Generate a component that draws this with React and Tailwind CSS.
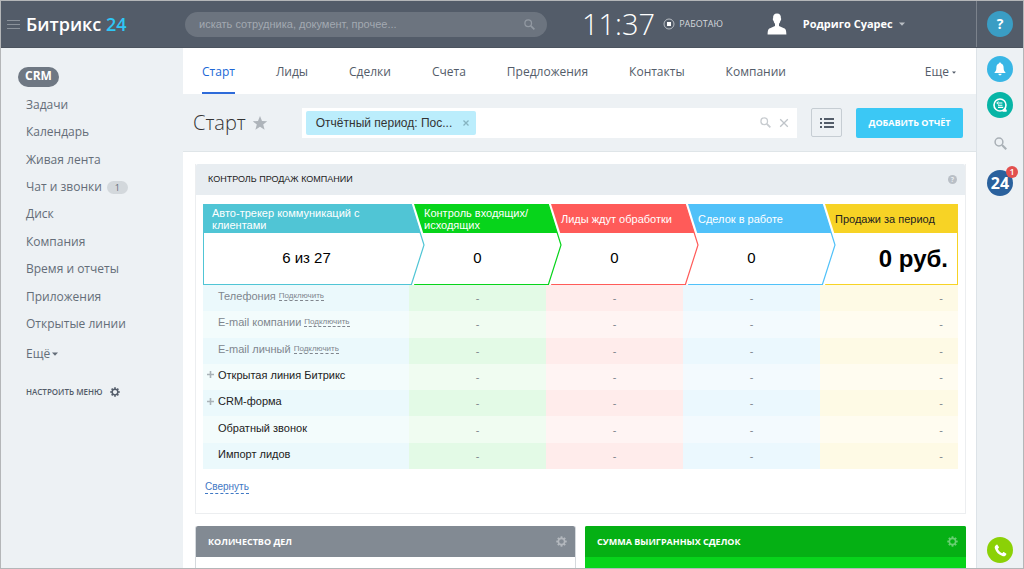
import React from "react";

const menu = [
  { label: "Задачи" },
  { label: "Календарь" },
  { label: "Живая лента" },
  { label: "Чат и звонки", count: 1 },
  { label: "Диск" },
  { label: "Компания" },
  { label: "Время и отчеты" },
  { label: "Приложения" },
  { label: "Открытые линии" },
];

const tabs = [
  "Старт",
  "Лиды",
  "Сделки",
  "Счета",
  "Предложения",
  "Контакты",
  "Компании",
];

const stages = [
  {
    title: "Авто-трекер коммуникаций с клиентами",
    value: "6 из 27",
    color: "#50c5d5",
    head: "bg-[#50c5d5] text-white pl-[9px] pr-8",
    body: "border-b-[#50c5d5] border-l border-l-[#50c5d5] text-[15px]",
  },
  {
    title: "Контроль входящих/исходящих",
    value: "0",
    color: "#07d41b",
    head: "bg-[#07d41b] text-white pl-[15px]",
    body: "border-b-[#07d41b] text-[15px]",
  },
  {
    title: "Лиды ждут обработки",
    value: "0",
    color: "#ff5b59",
    head: "bg-[#ff5b59] text-white pl-[15px]",
    body: "border-b-[#ff5b59] text-[15px]",
  },
  {
    title: "Сделок в работе",
    value: "0",
    color: "#50c1f9",
    head: "bg-[#50c1f9] text-white pl-[15px]",
    body: "border-b-[#50c1f9] text-[15px]",
  },
  {
    title: "Продажи за период",
    value: "0 руб.",
    head: "bg-[#f7d325] text-[#222] pl-[15px]",
    body: "border-b-[#f7d325] border-r border-r-[#f7d325] justify-end pr-[9px] text-2xl font-bold",
  },
];

const sources = [
  { name: "Телефония", connect: true },
  { name: "E-mail компании", connect: true },
  { name: "E-mail личный", connect: true },
  { name: "Открытая линия Битрикс", nested: true },
  { name: "CRM-форма", nested: true },
  { name: "Обратный звонок" },
  { name: "Импорт лидов" },
];

// Cell tints of the funnel, for odd and even rows
const tints = [
  ["bg-[#ebf9fc]", "bg-[#f3fcfc]"],
  ["bg-[#e3fae6]", "bg-[#f0fcf1]"],
  ["bg-[#ffeceb]", "bg-[#fff4f3]"],
  ["bg-[#ebf8fe]", "bg-[#f3fafe]"],
  ["bg-[#fefae5]", "bg-[#fffcf0]"],
];

function Caret({ className }) {
  return (
    <svg viewBox="0 0 6 4" className={className} fill="currentColor">
      <path d="M0 0.5h6L3 3.7z" />
    </svg>
  );
}

function Magnifier({ className }) {
  return (
    <svg
      viewBox="0 0 12 12"
      className={className}
      fill="none"
      stroke="currentColor"
    >
      <circle cx="4.6" cy="4.6" r="3.6" strokeWidth="1.4" />
      <path d="M7.4 7.4L11.3 11.3" strokeWidth="1.9" />
    </svg>
  );
}

function Gear({ className }) {
  const teeth = [0, 45, 90, 135, 180, 225, 270, 315];
  return (
    <svg viewBox="0 0 12 12" className={className} fill="none">
      <circle cx="6" cy="6" r="3.4" stroke="currentColor" strokeWidth="1.7" />
      {teeth.map((a) => (
        <rect
          key={a}
          x="5"
          y="0.3"
          width="2"
          height="2"
          fill="currentColor"
          transform={`rotate(${a} 6 6)`}
        />
      ))}
    </svg>
  );
}

// Arrow tip that overlaps the next column of the funnel
function StageTip({ color }) {
  return (
    <svg
      viewBox="0 0 18 81"
      className="absolute top-0 left-full z-10 h-[81px] w-[18px]"
      fill="none"
    >
      <path d="M0 0H5L18 41L5 81H0z" fill="#fff" />
      <path d="M0 0H2.2L11.4 29H0z" fill={color} />
      <path
        d="M2.2 0L15 41L2.4 80.5H0"
        stroke={color}
        strokeWidth="1.2"
      />
    </svg>
  );
}

function Header() {
  return (
    <header className="flex h-[47px] shrink-0 border-b border-[#4c545f] bg-[#535c69]">
      <div className="flex w-[182px] shrink-0 items-center pl-1.5">
        <button aria-label="Меню" className="flex w-[13px] flex-col gap-[3px]">
          <span className="h-px w-full bg-[#8b929b]" />
          <span className="h-px w-full bg-[#8b929b]" />
          <span className="h-px w-full bg-[#8b929b]" />
        </button>
        <a
          href="#"
          className="ml-1.5 text-[18px] leading-6 font-semibold whitespace-nowrap text-white"
        >
          Битрикс <span className="text-[#2fc6f6]">24</span>
        </a>
      </div>

      <div className="flex flex-1 items-center">
        <label className="ml-0.5 flex h-[25px] w-[362px] items-center rounded-full bg-[#6c747f] pr-3 pl-3.5">
          <input
            type="text"
            aria-label="Поиск"
            placeholder="искать сотрудника, документ, прочее..."
            className="min-w-0 flex-1 bg-transparent font-['Liberation_Sans',sans-serif] text-[11px] outline-none placeholder:text-[#a3a9b1]"
          />
          <Magnifier className="size-[11px] text-[#9299a2]" />
        </label>
        <span className="ml-[35px] text-[29px] leading-8 font-light text-white">
          11:37
        </span>
        <button className="ml-2 flex items-center gap-1 text-[9px] text-[#d5d8dc]">
          <svg viewBox="0 0 12 12" className="size-3" fill="none">
            <circle cx="6" cy="6" r="5" stroke="#b9bec4" />
            <rect x="4" y="4" width="4" height="4" fill="#fff" />
          </svg>
          РАБОТАЮ
        </button>
        <button className="ml-11 flex items-center text-[11px] font-bold text-white">
          <svg viewBox="0 0 20 22" className="h-[22px] w-5" fill="#fff">
            <path d="M10 0.5C7.2 0.5 5.9 2.5 6.1 5.2C5.4 5.6 6 7.6 6.6 7.8C6.9 9.4 7.4 10.2 8 10.8V13L3 15.2C1 16.1 0.8 17.5 0.6 21.5H19.4C19.2 17.5 19 16.1 17 15.2L12 13V10.8C12.6 10.2 13.1 9.4 13.4 7.8C14 7.6 14.6 5.6 13.9 5.2C14.1 2.5 12.8 0.5 10 0.5z" />
          </svg>
          <span className="ml-4">Родриго Суарес</span>
          <Caret className="ml-1.5 h-1 w-1.5 text-[#b9bec4]" />
        </button>
      </div>

      <div className="flex w-[47px] shrink-0 items-center justify-center border-l border-[#7b828c]">
        <button
          aria-label="Помощь"
          className="size-[26px] rounded-full bg-[#3a9dc4] text-sm font-bold text-white"
        >
          ?
        </button>
      </div>
    </header>
  );
}

function Sidebar() {
  return (
    <nav className="w-[182px] shrink-0 pt-[19px] text-xs text-[#646d78]">
      <a
        href="#"
        className="ml-[17px] block h-5 w-[41px] rounded-full bg-[#6f7883] text-center leading-[18px] font-bold text-white"
      >
        CRM
      </a>
      <ul className="mt-1 ml-[25px] grid h-[247px]">
        {menu.map((item) => (
          <li key={item.label} className="flex items-center">
            <a href="#">{item.label}</a>
            {item.count && (
              <span className="ml-[5px] h-[13px] w-[21px] rounded-full bg-[#d3d8dc] text-center text-[9px] leading-[13px]">
                {item.count}
              </span>
            )}
          </li>
        ))}
      </ul>
      <button className="mt-2 ml-[25px] flex items-center gap-0.5">
        Ещё <Caret className="h-1 w-1.5" />
      </button>
      <button className="mt-[22px] ml-[25px] flex items-center gap-2 text-[8px] leading-4 font-semibold text-[#535c69]">
        НАСТРОИТЬ МЕНЮ <Gear className="size-2.5" />
      </button>
    </nav>
  );
}

function Tabs() {
  return (
    <nav className="flex h-[46px] shrink-0 items-stretch gap-[41px] bg-white pt-1 pr-5 pl-[19px] text-xs font-medium text-[#535c69]">
      {tabs.map((tab, i) => (
        <a
          key={tab}
          href="#"
          className={
            i === 0
              ? "flex items-center border-b-2 border-[#2e6bd9] text-[#2067d6]"
              : "flex items-center border-b-2 border-transparent"
          }
        >
          {tab}
        </a>
      ))}
      <button className="ml-auto flex items-center gap-[3px] border-b-2 border-transparent">
        Еще <Caret className="h-[3px] w-1" />
      </button>
    </nav>
  );
}

function Toolbar() {
  return (
    <div className="flex h-[58px] shrink-0 items-center border-b border-[#dfe5e8] pr-[13px] pl-2.5">
      <h1 className="text-[20px] font-light text-[#333]">Старт</h1>
      <button aria-label="В избранное" className="ml-1.5">
        <svg viewBox="0 0 16 16" className="size-4" fill="#aeb4ba">
          <path d="M8 1L10 6L15.2 6.3L11.2 9.6L12.6 14.7L8 11.8L3.4 14.7L4.8 9.6L0.8 6.3L6 6z" />
        </svg>
      </button>
      <div className="ml-[34px] flex h-[30px] min-w-0 flex-1 items-center bg-white pr-2 pl-1">
        <span className="flex h-6 w-[170px] items-center justify-between rounded-xs bg-[#bbedfc] pr-[7px] pl-2.5 font-['Liberation_Sans',sans-serif] text-xs text-[#333]">
          Отчётный период: Пос...
          <button aria-label="Удалить">
            <svg viewBox="0 0 6 6" className="size-1.5" stroke="#86b3c1">
              <path d="M0.5 0.5L5.5 5.5M5.5 0.5L0.5 5.5" strokeWidth="1.3" />
            </svg>
          </button>
        </span>
        <input aria-label="Фильтр" className="min-w-0 flex-1 outline-none" />
        <button aria-label="Найти">
          <Magnifier className="size-[11px] text-[#c8ccd0]" />
        </button>
        <button aria-label="Сбросить" className="ml-2">
          <svg viewBox="0 0 10 10" className="size-2.5" stroke="#bfc4c9">
            <path d="M1.2 1.2L8.8 8.8M8.8 1.2L1.2 8.8" strokeWidth="1.3" />
          </svg>
        </button>
      </div>
      <button
        aria-label="Список"
        className="ml-3.5 flex h-[29px] w-[31px] items-center justify-center rounded-xs border border-[#c6cdd3]"
      >
        <svg viewBox="0 0 14 12" className="h-3 w-3.5" fill="#535c69">
          <path d="M0 1h2v2H0zM0 5h2v2H0zM0 9h2v2H0zM4 1h10v2H4zM4 5h10v2H4zM4 9h10v2H4z" />
        </svg>
      </button>
      <button className="ml-3.5 h-[30px] w-[107px] rounded-xs bg-[#3bc8f5] text-[9px] font-bold text-white">
        ДОБАВИТЬ ОТЧЁТ
      </button>
    </div>
  );
}

function Funnel() {
  return (
    <table className="h-[265px] w-full table-fixed border-collapse font-['Liberation_Sans',sans-serif]">
      <colgroup>
        <col />
        <col className="w-[137px]" />
        <col className="w-[137px]" />
        <col className="w-[137px]" />
        <col className="w-[138px]" />
      </colgroup>
      <thead>
        <tr className="h-[81px]">
          {stages.map((s) => (
            <th key={s.title} scope="col" className="relative p-0 font-normal">
              <div
                className={`flex h-[29px] items-center text-left text-[11px] leading-3 ${s.head}`}
              >
                {s.title}
              </div>
              <div
                className={`flex h-[52px] items-center justify-center border-b text-black ${s.body}`}
              >
                {s.value}
              </div>
              {s.color && <StageTip color={s.color} />}
            </th>
          ))}
        </tr>
      </thead>
      <tbody className="text-[11px] leading-4 text-[#80868e]">
        {sources.map((row, i) => (
          <tr key={row.name}>
            <th
              scope="row"
              className={`p-0 pb-1 text-left font-normal ${tints[0][i % 2]}`}
            >
              <span className="flex items-center">
                <span className="flex w-[15px] justify-end pr-1">
                  {row.nested && (
                    <svg viewBox="0 0 7 7" className="size-[7px] shrink-0">
                      <path
                        d="M3.5 0V7M0 3.5H7"
                        stroke="#a9b2b7"
                        strokeWidth="1.6"
                      />
                    </svg>
                  )}
                </span>
                <span className={row.connect ? "" : "text-[#222]"}>
                  {row.name}
                </span>
                {row.connect && (
                  <a
                    href="#"
                    className="ml-[3px] border-b border-dashed border-[#80868e] text-[8px] leading-[9px]"
                  >
                    Подключить
                  </a>
                )}
              </span>
            </th>
            <td className={`p-0 text-center ${tints[1][i % 2]}`}>-</td>
            <td className={`p-0 text-center ${tints[2][i % 2]}`}>-</td>
            <td className={`p-0 text-center ${tints[3][i % 2]}`}>-</td>
            <td className={`p-0 pr-[15px] text-right ${tints[4][i % 2]}`}>
              -
            </td>
          </tr>
        ))}
      </tbody>
    </table>
  );
}

function Rail() {
  return (
    <aside className="flex w-[47px] shrink-0 flex-col items-center border-l border-[#dde3e8] pt-2 pb-[5px]">
      <button
        aria-label="Уведомления"
        className="flex size-[26px] items-center justify-center rounded-full bg-[#38b6e5]"
      >
        <svg viewBox="0 0 12 14" className="h-3.5 w-3" fill="#fff">
          <path d="M6 0.5C5.3 0.5 5 1 5 1.6C3.2 2.1 2.4 3.6 2.4 5.4C2.4 8.2 1.8 9 0.6 10.2V11H11.4V10.2C10.2 9 9.6 8.2 9.6 5.4C9.6 3.6 8.8 2.1 7 1.6C7 1 6.7 0.5 6 0.5zM4.4 11.7C4.5 12.7 5.1 13.3 6 13.3S7.5 12.7 7.6 11.7z" />
        </svg>
      </button>
      <button
        aria-label="Чат"
        className="mt-2.5 flex size-[26px] items-center justify-center rounded-full bg-[#07b5a6]"
      >
        <svg viewBox="0 0 14 14" className="size-3.5" fill="none" stroke="#fff">
          <circle cx="7" cy="7" r="6" strokeWidth="1.6" />
          <path d="M9.8 13.2H13.4L12.4 10.4z" fill="#fff" />
          <path d="M3.8 5H9.4M5 7.2H9.4M5 9.4H10.2" strokeWidth="1.1" />
          <path d="M5.4 3.4L3.8 5L5.4 6.6" strokeWidth="0.9" />
        </svg>
      </button>
      <button aria-label="Поиск" className="mt-[19px]">
        <Magnifier className="size-[13px] text-[#a9b0b6]" />
      </button>
      <button className="relative mt-5 size-[26px] rounded-full bg-[#2a619d] text-base leading-[26px] font-bold text-white">
        24
        <span className="absolute -top-1 -right-[5px] size-3 rounded-full bg-[#e2504e] text-[9px] leading-3 font-semibold">
          1
        </span>
      </button>
      <button
        aria-label="Позвонить"
        className="mt-auto flex size-[26px] items-center justify-center rounded-full bg-[#8bd106]"
      >
        <svg viewBox="0 0 13 13" className="size-[13px]" fill="#fff">
          <path d="M2.6 0.7C1 1.5 0.4 2.9 0.9 4.6C2 8.2 4.8 11 8.4 12.1C10.1 12.6 11.5 12 12.3 10.4C12.4 10 12.4 9.7 12.1 9.5L10.1 8.2C9.7 8 9.3 8 9 8.4L8.2 9.3C6.3 8.5 4.6 6.8 3.8 4.8L4.7 4C5 3.7 5.1 3.3 4.9 2.9L3.5 0.9C3.3 0.6 2.9 0.5 2.6 0.7z" />
        </svg>
      </button>
    </aside>
  );
}

export default function App() {
  return (
    <div className="flex h-screen flex-col overflow-hidden border border-[#b4b6b8] bg-[#edf1f4] font-['Open_Sans',sans-serif]">
      <Header />
      <div className="flex min-h-0 flex-1">
        <Sidebar />
        <main className="flex min-w-0 flex-1 flex-col overflow-hidden">
          <Tabs />
          <Toolbar />
          <div className="flex-1 bg-white pt-3 pr-2.5 pl-3">
            <section className="border border-t-0 border-[#eceef0]">
              <div className="flex h-[31px] items-center justify-between rounded-t-xs bg-[#e8edf1] pr-2 pl-3">
                <h2 className="font-['Liberation_Sans',sans-serif] text-[9px] text-[#222]">
                  КОНТРОЛЬ ПРОДАЖ КОМПАНИИ
                </h2>
                <button
                  aria-label="Справка"
                  className="size-[9px] rounded-full bg-[#b9bfc6] text-[7px] leading-[9px] font-bold text-[#e8edf1]"
                >
                  ?
                </button>
              </div>
              <div className="px-[7px] pt-[9px] pb-[17px]">
                <Funnel />
                <button className="mt-3 ml-0.5 border-b border-dashed border-[#3f78c4] font-['Liberation_Sans',sans-serif] text-[10px] leading-3 text-[#3f78c4]">
                  Свернуть
                </button>
              </div>
            </section>

            <div className="mt-3 grid grid-cols-2 gap-[9px]">
              <section className="h-40 rounded-t-xs border border-t-0 border-[#d5d9dd]">
                <div className="flex h-[31px] items-center justify-between rounded-t-xs bg-[#828a93] pr-2 pl-3">
                  <h2 className="text-[9px] font-bold text-white">
                    КОЛИЧЕСТВО ДЕЛ
                  </h2>
                  <button aria-label="Настройки">
                    <Gear className="size-[11px] text-[#b3b8be]" />
                  </button>
                </div>
              </section>
              <section className="h-40 rounded-t-xs bg-[#07d41b]">
                <div className="flex h-[31px] items-center justify-between rounded-t-xs bg-[#05b014] pr-2 pl-3">
                  <h2 className="text-[9px] font-bold text-white">
                    СУММА ВЫИГРАННЫХ СДЕЛОК
                  </h2>
                  <button aria-label="Настройки">
                    <Gear className="size-[11px] text-[#69cf72]" />
                  </button>
                </div>
              </section>
            </div>
          </div>
        </main>
        <Rail />
      </div>
    </div>
  );
}
